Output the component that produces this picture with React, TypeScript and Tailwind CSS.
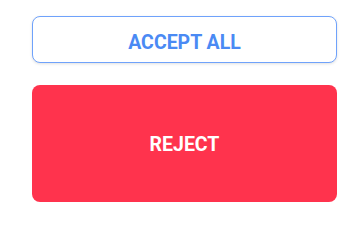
import React from "react";

export default function App() {
  return (
    <div className="w-[354px] h-[220px] bg-white pt-[16px] pl-[32px] font-['Roboto',sans-serif]">
      <div className="flex flex-col gap-[22px] w-[305px]">
        <button className="h-[47px] w-full rounded-[8px] border border-[#6fa2fb] bg-white pt-[7px] text-[#4a8af4] text-[19.5px] font-bold leading-none shadow-[0_1px_3px_rgba(0,0,0,0.12)]">
          ACCEPT ALL
        </button>
        <button className="h-[117px] w-full rounded-[8px] bg-[#ff334d] pt-[2px] text-white text-[19.5px] font-bold leading-none">
          REJECT
        </button>
      </div>
    </div>
  );
}
